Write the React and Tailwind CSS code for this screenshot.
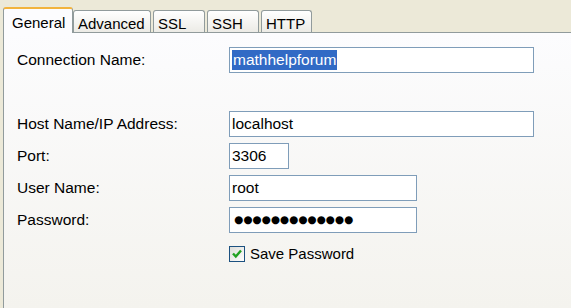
import React from "react";

const font = { fontFamily: '"Liberation Sans", Arial, sans-serif' };

const Tab = ({ label, width, active, className = "" }) => {
  if (active) {
    return (
      <div
        className={`relative z-10 -mb-px h-[26px] rounded-t-[3px] border border-b-0 border-[#919B9C] border-t-2 border-t-[#F2B33D] bg-[#FCFCFE] pl-[8px] pt-[3px] text-[15px] text-black ${className}`}
        style={{ width }}
      >
        {label}
      </div>
    );
  }
  return (
    <div
      className={`h-[22px] rounded-t-[3px] border border-b-0 border-[#919B9C] bg-gradient-to-b from-white to-[#ECEBE6] pl-[4px] pt-[2px] text-[15px] text-black ${className}`}
      style={{ width }}
    >
      {label}
    </div>
  );
};

const Field = ({ label, width, children, className = "" }) => (
  <div className={`flex items-center ${className}`}>
    <div className="w-[212px] text-[15.5px] text-black">{label}</div>
    <div
      className="flex h-[26px] items-center border border-[#7F9DB9] bg-white pl-[2px] text-[15.5px] text-black"
      style={{ width }}
    >
      {children}
    </div>
  </div>
);

export default function App() {
  return (
    <div className="flex h-[308px] w-[571px] flex-col overflow-hidden bg-[#ECE9D8]" style={font}>
      <div className="flex h-[32px] items-end pl-[3px]">
        <Tab label="General" width={70} active />
        <Tab label="Advanced" width={78} />
        <Tab label="SSL" width={52} className="ml-[2px]" />
        <Tab label="SSH" width={52} className="ml-[2px]" />
        <Tab label="HTTP" width={51} className="ml-[2px]" />
      </div>
      <div className="ml-[3px] flex-1 border-l border-t border-[#919B9C] bg-gradient-to-b from-[#FCFCFE] to-[#F4F3EE] pl-[13px] pt-[14px]">
        <Field label="Connection Name:" width={305}>
          <span className="bg-[#316AC5] px-px leading-[20px] text-white">mathhelpforum</span>
        </Field>
        <Field label="Host Name/IP Address:" width={305} className="mt-[38px]">
          localhost
        </Field>
        <Field label="Port:" width={60} className="mt-[6px]">
          3306
        </Field>
        <Field label="User Name:" width={188} className="mt-[6px]">
          root
        </Field>
        <Field label="Password:" width={188} className="mt-[6px]">
          <span
            className="pl-[2px] text-[10.5px]"
            style={{ fontFamily: '"DejaVu Sans", sans-serif' }}
          >
            ●●●●●●●●●●●●●
          </span>
        </Field>
        <div className="ml-[212px] mt-[10px] flex items-center">
          <svg width="16" height="16" viewBox="0 0 16 16">
            <defs>
              <linearGradient id="cb" x1="0" y1="0" x2="1" y2="1">
                <stop offset="0" stopColor="#DCDCD7" />
                <stop offset="1" stopColor="#FFFFFF" />
              </linearGradient>
            </defs>
            <rect x="0.5" y="0.5" width="15" height="15" fill="url(#cb)" stroke="#1C5180" />
            <path d="M4 7.5 L6.8 10.5 L12 4.5" fill="none" stroke="#21A121" strokeWidth="2.4" />
          </svg>
          <span className="ml-[5px] text-[15px] text-black">Save Password</span>
        </div>
      </div>
    </div>
  );
}
